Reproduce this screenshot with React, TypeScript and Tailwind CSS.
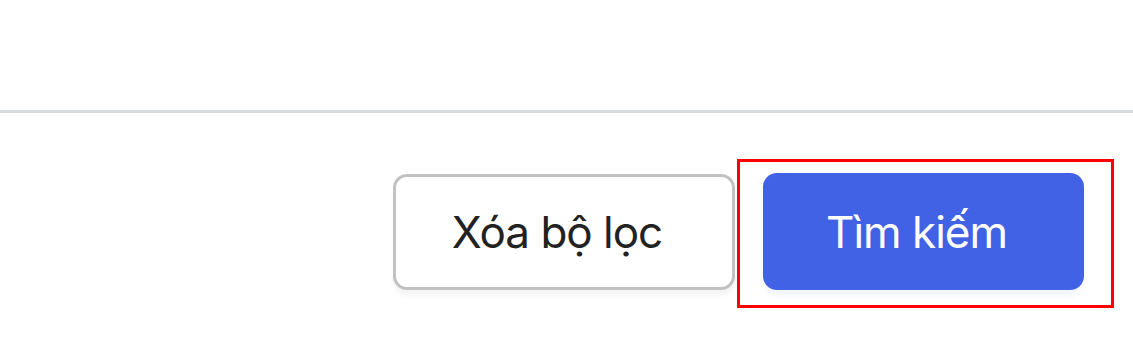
export default function App() {
  return (
    <div className="w-[1133px] h-[337px] bg-white" style={{ fontFamily: "Inter, 'Noto Sans', sans-serif" }}>
      <div className="h-[110px]" />
      <div className="h-[3px] bg-[#d9dcdf]" />
      <div className="flex justify-end items-start pt-[46px] pr-[19px]">
        <button className="mt-[15px] w-[342px] h-[116px] pr-[14px] rounded-[14px] border-[3px] border-[#c2c2c2] bg-white text-[#222] text-[44px] tracking-[-1px] shadow-[0_6px_4px_rgba(0,0,0,0.04)]">
          Xóa bộ lọc
        </button>
        <div className="ml-[2px] border-[3px] border-[#ff0000] pl-[23px] pr-[27px] pt-[11px] pb-[15px]">
          <button className="w-[321px] h-[117px] pr-[14px] rounded-[14px] bg-[#4262e6] text-white text-[44px] tracking-[-1px] shadow-[0_6px_4px_rgba(66,98,230,0.06)]">
            Tìm kiếm
          </button>
        </div>
      </div>
    </div>
  );
}
